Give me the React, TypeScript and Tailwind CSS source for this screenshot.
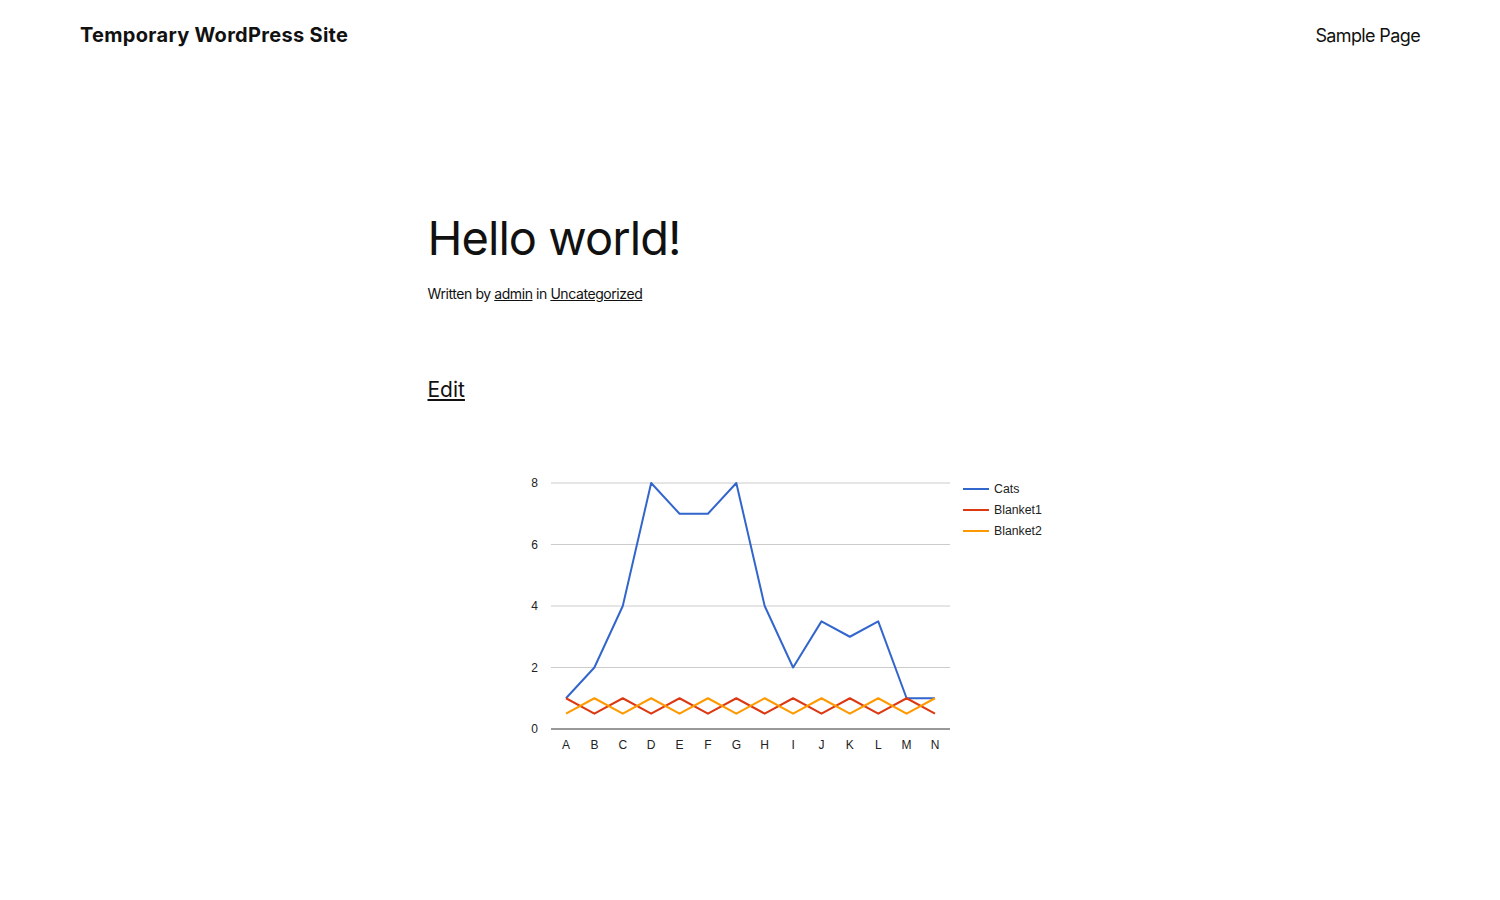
const labels = ["A", "B", "C", "D", "E", "F", "G", "H", "I", "J", "K", "L", "M", "N"];
const cats = [1, 2, 4, 8, 7, 7, 8, 4, 2, 3.5, 3, 3.5, 1, 1];
const blanket1 = labels.map((_, i) => (i % 2 === 0 ? 1 : 0.5));
const blanket2 = labels.map((_, i) => (i % 2 === 0 ? 0.5 : 1));

// chart geometry in svg coords
const left = 123;
const right = 522;
const zeroY = 278;
const unit = 30.75;
const firstX = 138;
const step = (507 - 138) / 13;

const px = (i: number) => firstX + i * step;
const py = (v: number) => zeroY - v * unit;
const points = (data: number[]) => data.map((v, i) => `${px(i)},${py(v)}`).join(" ");

function LineChart() {
    const series = [
        { name: "Cats", color: "#3366cc", data: cats },
        { name: "Blanket1", color: "#dc3912", data: blanket1 },
        { name: "Blanket2", color: "#ff9900", data: blanket2 },
    ];
    return (
        <svg width="645" height="320" className="block" style={{ fontFamily: "Arial, 'Liberation Sans', sans-serif" }}>
            {[2, 4, 6, 8].map((v) => (
                <line key={v} x1={left} x2={right} y1={py(v)} y2={py(v)} stroke="#cccccc" strokeWidth="1" />
            ))}
            {[0, 2, 4, 6, 8].map((v) => (
                <text key={v} x={110} y={py(v) + 4} textAnchor="end" fontSize="12" fill="#222222">{v}</text>
            ))}
            {series.map((s) => (
                <polyline key={s.name} points={points(s.data)} fill="none" stroke={s.color} strokeWidth="2" strokeLinejoin="round" />
            ))}
            <line x1={left} x2={right} y1={zeroY} y2={zeroY} stroke="#333333" strokeWidth="1" />
            {labels.map((l, i) => (
                <text key={l} x={px(i)} y={298} textAnchor="middle" fontSize="12" fill="#222222">{l}</text>
            ))}
            {series.map((s, i) => (
                <g key={s.name}>
                    <line x1={535} x2={561} y1={38 + i * 21} y2={38 + i * 21} stroke={s.color} strokeWidth="2" />
                    <text x={566} y={42 + i * 21} fontSize="12.3" fill="#222222">{s.name}</text>
                </g>
            ))}
        </svg>
    );
}

export default function App() {
    return (
        <div className="min-h-[900px] bg-white text-[#111111]" style={{ fontFamily: "Inter, 'Noto Sans', sans-serif" }}>
            <header className="flex items-center justify-between px-[80px] h-[70px]">
                <a className="text-[20px] font-bold tracking-[0.015em]">Temporary WordPress Site</a>
                <a className="text-[18px] tracking-[-0.035em]">Sample Page</a>
            </header>
            <main className="mx-auto w-[645px] pt-[140px]">
                <h1 className="text-[47px] leading-[1.2] font-normal tracking-[-0.02em]">Hello world!</h1>
                <p className="mt-[17px] text-[14px] tracking-[-0.03em]">
                    Written by <a className="underline">admin</a> in <a className="underline">Uncategorized</a>
                </p>
                <p className="mt-[70px] text-[21px] tracking-[0em]">
                    <a className="underline">Edit</a>
                </p>
                <div className="mt-[45px]">
                    <LineChart />
                </div>
            </main>
        </div>
    );
}
